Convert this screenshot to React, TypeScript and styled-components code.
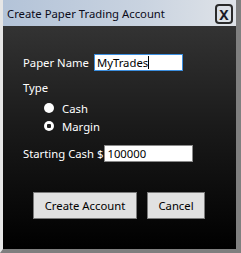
import styled, { createGlobalStyle } from "styled-components";

const GlobalStyle = createGlobalStyle`
  html, body {
    margin: 0;
    padding: 0;
    background: #808080;
  }
  body {
    font-family: "Noto Sans", "Open Sans", sans-serif;
  }
`;

const Window = styled.div`
  width: 241px;
  height: 253px;
  box-sizing: border-box;
  display: flex;
  flex-direction: column;
  border-left: 3px solid #e6e6e6;
  border-right: 5px solid #7f7f7f;
  border-bottom: 4px solid #7f7f7f;
  background: #7f7f7f;
`;

const TitleBar = styled.div`
  height: 26px;
  display: flex;
  align-items: center;
  justify-content: space-between;
  padding: 0 3px 0 4px;
  background: linear-gradient(90deg, #b3c3d8 0%, #c9d3e0 60%, #dfe3e8 100%);
  color: #0b0b1a;
  font-size: 11.3px;
`;

const CloseButton = styled.div`
  width: 14px;
  height: 16px;
  border: 2px solid #2a2a2a;
  border-radius: 4px;
  display: flex;
  align-items: center;
  justify-content: center;
  font-weight: bold;
  font-size: 14px;
  color: #1a1a2a;
  margin-top: 2px;
`;

const Body = styled.div`
  flex: 1;
  background: linear-gradient(180deg, #333333 0%, #1a1a1a 45%, #000000 100%);
  color: #ffffff;
  font-size: 11.3px;
  padding: 28px 0 0 20px;
  display: flex;
  flex-direction: column;
`;

const Row = styled.div<{ $mt?: number }>`
  display: flex;
  align-items: center;
  margin-top: ${(p) => p.$mt ?? 0}px;
  height: 17px;
`;

const Label = styled.span`
  white-space: nowrap;
`;

const TextBox = styled.div<{ $focused?: boolean; $width: number; $ml: number }>`
  width: ${(p) => p.$width}px;
  height: 17px;
  box-sizing: border-box;
  margin-left: ${(p) => p.$ml}px;
  background: #ffffff;
  border: 1px solid ${(p) => (p.$focused ? "#3c8fe0" : "#8a8a8a")};
  color: #000000;
  font-size: 11.3px;
  line-height: 15px;
  padding-left: 2px;
  display: flex;
  align-items: center;
`;

const Caret = styled.span`
  display: inline-block;
  width: 1px;
  height: 13px;
  background: #000;
`;

const RadioGroup = styled.div`
  display: flex;
  flex-direction: column;
  gap: 2px;
  margin-top: 4px;
  padding-left: 21px;
`;

const RadioRow = styled.div`
  display: flex;
  align-items: center;
  height: 16px;
`;

const RadioDot = styled.span<{ $checked?: boolean }>`
  width: 10px;
  height: 10px;
  border-radius: 50%;
  background: ${(p) => (p.$checked ? "radial-gradient(circle, #222 0 2px, #fff 2.5px)" : "#ffffff")};
  margin-right: 8px;
`;

const ButtonRow = styled.div`
  display: flex;
  gap: 10px;
  margin-top: 30px;
  padding-left: 10px;
`;

const Button = styled.button<{ $width: number }>`
  width: ${(p) => p.$width}px;
  height: 27px;
  background: #e1e1e1;
  border: 1px solid #7a7a7a;
  font-family: inherit;
  font-size: 11.3px;
  color: #000;
  padding: 0;
`;

export default function App() {
  return (
    <>
      <GlobalStyle />
      <Window>
        <TitleBar>
          <span>Create Paper Trading Account</span>
          <CloseButton>X</CloseButton>
        </TitleBar>
        <Body>
          <Row>
            <Label>Paper Name</Label>
            <TextBox $focused $width={89} $ml={5}>
              MyTrades
              <Caret />
            </TextBox>
          </Row>
          <Row $mt={8}>
            <Label>Type</Label>
          </Row>
          <RadioGroup>
            <RadioRow>
              <RadioDot />
              <Label>Cash</Label>
            </RadioRow>
            <RadioRow>
              <RadioDot $checked />
              <Label>Margin</Label>
            </RadioRow>
          </RadioGroup>
          <Row $mt={11}>
            <Label>Starting Cash $</Label>
            <TextBox $width={89} $ml={1}>
              100000
            </TextBox>
          </Row>
          <ButtonRow>
            <Button $width={104}>Create Account</Button>
            <Button $width={58}>Cancel</Button>
          </ButtonRow>
        </Body>
      </Window>
    </>
  );
}
